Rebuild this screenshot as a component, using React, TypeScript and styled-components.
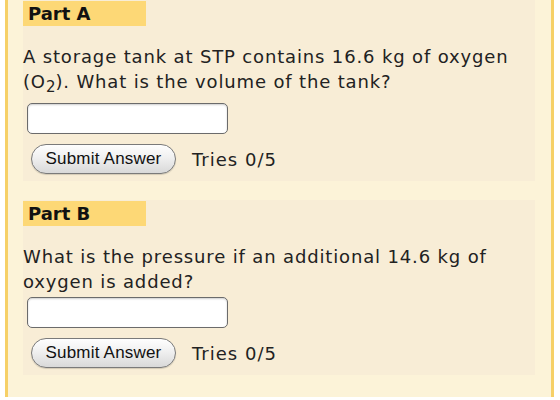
import * as React from "react";
import styled, { createGlobalStyle } from "styled-components";

const GlobalStyle = createGlobalStyle`
  html, body {
    margin: 0;
    padding: 0;
    background: #ffffff;
  }
  body {
    font-family: "DejaVu Sans", Verdana, sans-serif;
    color: #222222;
  }
`;

const SPanel = styled.div`
  box-sizing: border-box;
  width: 549px;
  height: 397px;
  margin-left: 5px;
  padding: 0 16px 25px 15px;
  background: #fcf3d8;
  border-left: 3px solid #f6d067;
  border-right: 3px solid #f6d067;
  display: flex;
  flex-direction: column;
  gap: 19px;
`;

const SPart = styled.section`
  background: #f8edd6;
  padding: 1px 0 7px 0;
  display: flex;
  flex-direction: column;
`;

const SPartLabel = styled.div`
  box-sizing: border-box;
  width: 123px;
  height: 25px;
  padding-left: 5px;
  background: #fdd876;
  font-weight: bold;
  font-size: 18px;
  line-height: 25px;
  color: #111111;
`;

const SQuestion = styled.p`
  margin: 18px 0 0 0;
  font-size: 18px;
  line-height: 25px;
  color: #222222;
  letter-spacing: 0.85px;
`;

// subscript sits low and pushes the line box down a little, as in the original
const SSub = styled.sub`
  font-size: 15px;
  line-height: inherit;
  vertical-align: -4px;
  letter-spacing: 0;
`;

const SInput = styled.input`
  box-sizing: border-box;
  width: 201px;
  height: 31px;
  margin: 3px 0 0 4px;
  border: 1px solid #6b6b6b;
  border-radius: 5px;
  background: #ffffff;
  box-shadow: inset 0 1px 2px rgba(0, 0, 0, 0.2);
`;

const SActions = styled.div`
  display: flex;
  align-items: center;
  gap: 16px;
  margin: 10px 0 0 8px;
`;

const SSubmit = styled.button`
  box-sizing: border-box;
  width: 145px;
  height: 30px;
  padding: 0;
  border: 1px solid #7a7a7a;
  border-radius: 15px;
  background: linear-gradient(#fefefe, #f0f0f0 45%, #d9d9d9);
  box-shadow: 0 1px 1px rgba(0, 0, 0, 0.15);
  font-family: "Liberation Sans", Arial, sans-serif;
  font-size: 17px;
  letter-spacing: 0.2px;
  color: #111111;
`;

const STries = styled.span`
  font-size: 18px;
  letter-spacing: 1px;
  color: #222222;
`;

interface IPartProps {
  label: string;
  children: React.ReactNode;
}

const Part = ({ label, children }: IPartProps) => (
  <SPart>
    <SPartLabel>{label}</SPartLabel>
    <SQuestion>{children}</SQuestion>
    <SInput type="text" />
    <SActions>
      <SSubmit type="button">{"Submit Answer"}</SSubmit>
      <STries>{"Tries 0/5"}</STries>
    </SActions>
  </SPart>
);

const App = () => (
  <>
    <GlobalStyle />
    <SPanel>
      <Part label="Part A">
        A storage tank at STP contains 16.6 kg of oxygen (O<SSub>2</SSub>).
        What is the volume of the tank?
      </Part>
      <Part label="Part B">
        What is the pressure if an additional 14.6 kg of oxygen is added?
      </Part>
    </SPanel>
  </>
);

export default App;
